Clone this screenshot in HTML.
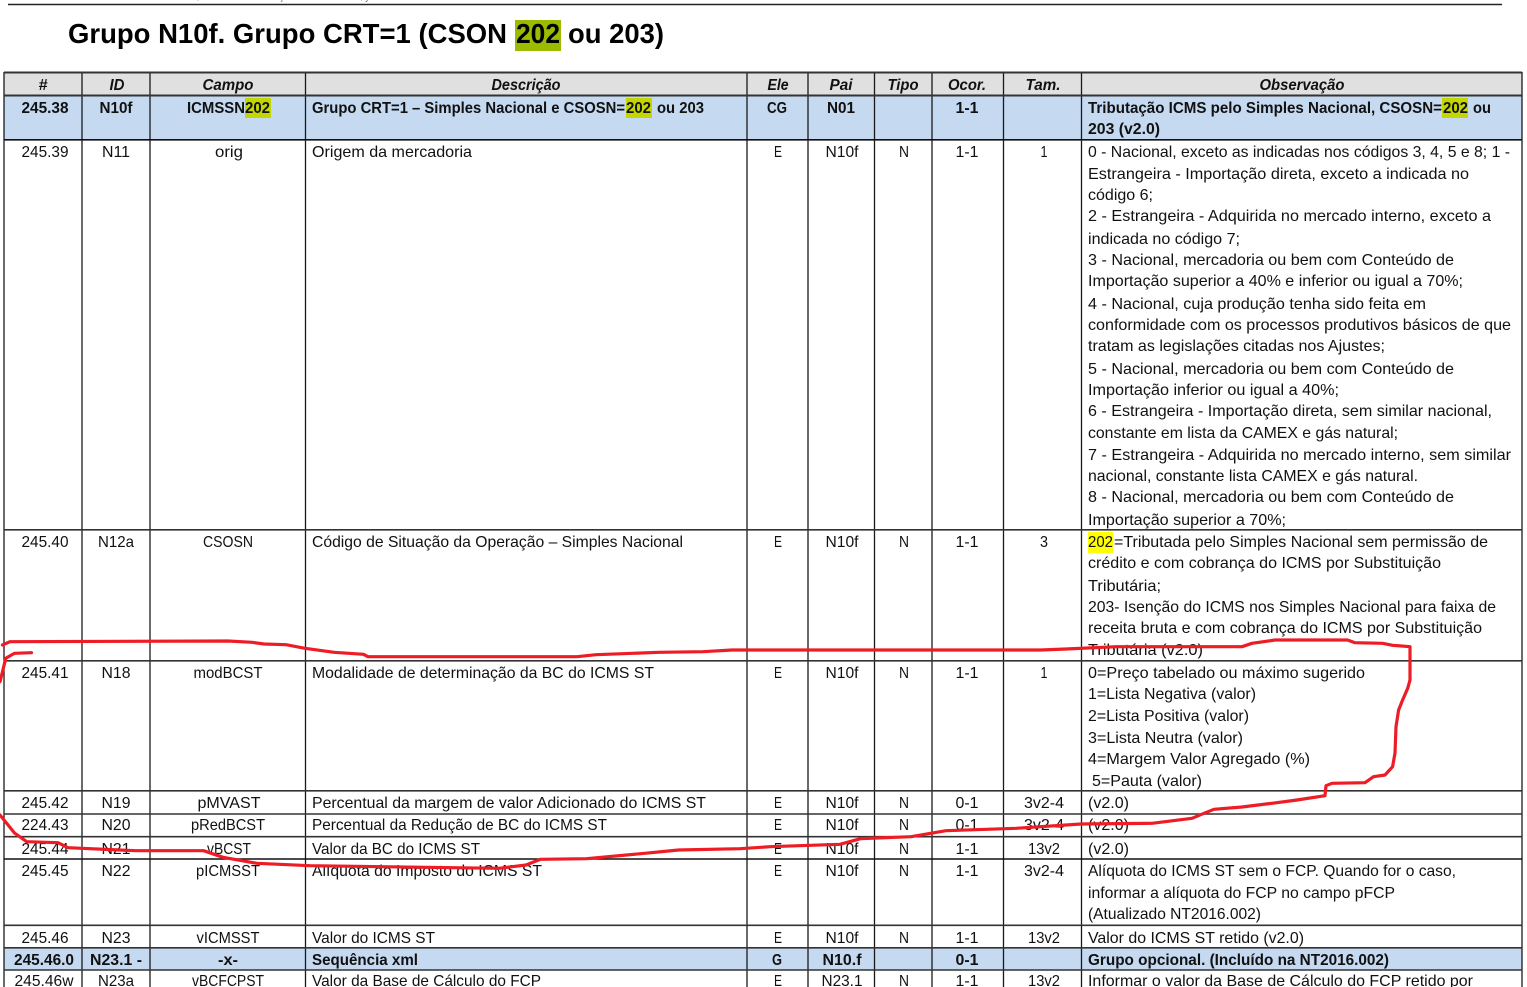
<!DOCTYPE html>
<html lang="pt"><head><meta charset="utf-8"><title>Grupo N10f</title>
<style>
html,body{margin:0;padding:0;background:#fff;width:1527px;height:987px;overflow:hidden}
svg{display:block}
text{font-family:"Liberation Sans",Arial,sans-serif;font-size:16px;fill:#111}
.c{text-anchor:middle}
.b{font-weight:bold}
.h{font-weight:bold;font-style:italic}
.t{font-size:28px;font-weight:bold;fill:#000}
.v{stroke:#1a1a1a;stroke-width:1.3}
.l{stroke:#333;stroke-width:1.6}
.r{fill:none;stroke:#ee1c25;stroke-width:3.2;stroke-linejoin:round;stroke-linecap:round}
</style></head><body>
<svg width="1527" height="987" viewBox="0 0 1527 987" xmlns="http://www.w3.org/2000/svg">
<rect width="1527" height="987" fill="#fff"/>
<text x="150" y="-1" style="font-size:14px;fill:#777" textLength="220" lengthAdjust="spacingAndGlyphs">Nota Fiscal, Manual de Orientação ao Contribuinte, y</text>
<line x1="8" y1="4.5" x2="1502" y2="4.5" stroke="#222" stroke-width="1.6"/>

<rect x="515" y="20" width="46" height="31" fill="#9bbb00"/>
<text class="t" x="68" y="43" textLength="439" lengthAdjust="spacingAndGlyphs">Grupo N10f. Grupo CRT=1 (CSON</text>
<text class="t" x="516" y="43" textLength="44" lengthAdjust="spacingAndGlyphs">202</text>
<text class="t" x="568" y="43" textLength="96" lengthAdjust="spacingAndGlyphs">ou 203)</text>

<rect x="4" y="73" width="1518" height="22" fill="#e0e0e0"/>
<rect x="4" y="95" width="1518" height="45" fill="#c5d9f1"/>
<rect x="4" y="948" width="1518" height="22" fill="#c5d9f1"/>
<rect x="245" y="98" width="26" height="20" fill="#c4d600"/>
<rect x="626" y="98" width="26" height="20" fill="#c4d600"/>
<rect x="1442" y="98" width="26" height="20" fill="#c4d600"/>
<rect x="1088" y="532" width="25" height="21" fill="#ffff00"/>

<g class="v">
<line class="v" x1="4" y1="72" x2="4" y2="987"/><line class="v" x1="82" y1="72" x2="82" y2="987"/><line class="v" x1="150" y1="72" x2="150" y2="987"/><line class="v" x1="305.500" y1="72" x2="305.500" y2="987"/><line class="v" x1="747" y1="72" x2="747" y2="987"/><line class="v" x1="808" y1="72" x2="808" y2="987"/><line class="v" x1="874.500" y1="72" x2="874.500" y2="987"/><line class="v" x1="932" y1="72" x2="932" y2="987"/><line class="v" x1="1003.500" y1="72" x2="1003.500" y2="987"/><line class="v" x1="1081.500" y1="72" x2="1081.500" y2="987"/><line class="v" x1="1522" y1="72" x2="1522" y2="987"/>
</g>
<line class="l" x1="4" y1="72.500" x2="1522" y2="72.500" style="stroke-width:2"/>
<line class="l" x1="4" y1="95.500" x2="1522" y2="95.500" style="stroke-width:2"/>
<line class="l" x1="4" y1="139.800" x2="1522" y2="139.800" style="stroke:#111"/>
<line class="l" x1="4" y1="529.800" x2="1522" y2="529.800"/>
<line class="l" x1="4" y1="660.800" x2="1522" y2="660.800"/>
<line class="l" x1="4" y1="790.800" x2="1522" y2="790.800"/>
<line class="l" x1="4" y1="814" x2="1522" y2="814"/>
<line class="l" x1="4" y1="836.700" x2="1522" y2="836.700"/>
<line class="l" x1="4" y1="859" x2="1522" y2="859" style="stroke:#111"/>
<line class="l" x1="4" y1="925.300" x2="1522" y2="925.300"/>
<line class="l" x1="4" y1="947.800" x2="1522" y2="947.800"/>
<line class="l" x1="4" y1="970" x2="1522" y2="970"/>

<g>
<!-- header -->
<text class="h c" x="43" y="90" textLength="9" lengthAdjust="spacingAndGlyphs">#</text>
<text class="h c" x="117" y="90" textLength="15" lengthAdjust="spacingAndGlyphs">ID</text>
<text class="h c" x="228" y="90" textLength="51" lengthAdjust="spacingAndGlyphs">Campo</text>
<text class="h c" x="526" y="90" textLength="69" lengthAdjust="spacingAndGlyphs">Descrição</text>
<text class="h c" x="778" y="90" textLength="21" lengthAdjust="spacingAndGlyphs">Ele</text>
<text class="h c" x="841" y="90" textLength="23" lengthAdjust="spacingAndGlyphs">Pai</text>
<text class="h c" x="903" y="90" textLength="31" lengthAdjust="spacingAndGlyphs">Tipo</text>
<text class="h c" x="967" y="90" textLength="38" lengthAdjust="spacingAndGlyphs">Ocor.</text>
<text class="h c" x="1043" y="90" textLength="35" lengthAdjust="spacingAndGlyphs">Tam.</text>
<text class="h c" x="1302" y="90" textLength="85" lengthAdjust="spacingAndGlyphs">Observação</text>

<!-- row 245.38 -->
<text class="b c" x="45" y="113" textLength="47" lengthAdjust="spacingAndGlyphs">245.38</text>
<text class="b c" x="116" y="113" textLength="33" lengthAdjust="spacingAndGlyphs">N10f</text>
<text class="b" x="187" y="113" textLength="58" lengthAdjust="spacingAndGlyphs">ICMSSN</text>
<text class="b" x="245" y="113" textLength="25" lengthAdjust="spacingAndGlyphs">202</text>
<text class="b" x="312" y="113" textLength="313" lengthAdjust="spacingAndGlyphs">Grupo CRT=1 – Simples Nacional e CSOSN=</text>
<text class="b" x="626" y="113" textLength="25" lengthAdjust="spacingAndGlyphs">202</text>
<text class="b" x="657" y="113" textLength="47" lengthAdjust="spacingAndGlyphs">ou 203</text>
<text class="b c" x="777" y="113" textLength="20" lengthAdjust="spacingAndGlyphs">CG</text>
<text class="b c" x="841" y="113" textLength="28" lengthAdjust="spacingAndGlyphs">N01</text>
<text class="b c" x="967" y="113" textLength="23" lengthAdjust="spacingAndGlyphs">1-1</text>
<text class="b" x="1088" y="113" textLength="354" lengthAdjust="spacingAndGlyphs">Tributação ICMS pelo Simples Nacional, CSOSN=</text>
<text class="b" x="1443" y="113" textLength="25" lengthAdjust="spacingAndGlyphs">202</text>
<text class="b" x="1473" y="113" textLength="18" lengthAdjust="spacingAndGlyphs">ou</text>
<text class="b" x="1088" y="134" textLength="72" lengthAdjust="spacingAndGlyphs">203 (v2.0)</text>

<!-- row 245.39 -->
<text class="c" x="45" y="157" textLength="47" lengthAdjust="spacingAndGlyphs">245.39</text>
<text class="c" x="116" y="157" textLength="28" lengthAdjust="spacingAndGlyphs">N11</text>
<text class="c" x="229" y="157" textLength="28" lengthAdjust="spacingAndGlyphs">orig</text>
<text x="312" y="157" textLength="160" lengthAdjust="spacingAndGlyphs">Origem da mercadoria</text>
<text class="c" x="778" y="157" textLength="8" lengthAdjust="spacingAndGlyphs">E</text>
<text class="c" x="842" y="157" textLength="33" lengthAdjust="spacingAndGlyphs">N10f</text>
<text class="c" x="904" y="157" textLength="10" lengthAdjust="spacingAndGlyphs">N</text>
<text class="c" x="967" y="157" textLength="23" lengthAdjust="spacingAndGlyphs">1-1</text>
<text class="c" x="1044" y="157" textLength="7" lengthAdjust="spacingAndGlyphs">1</text>
<text x="1088" y="157" textLength="422" lengthAdjust="spacingAndGlyphs">0 - Nacional, exceto as indicadas nos códigos 3, 4, 5 e 8; 1 -</text>
<text x="1088" y="179" textLength="381" lengthAdjust="spacingAndGlyphs">Estrangeira - Importação direta, exceto a indicada no</text>
<text x="1088" y="200" textLength="65" lengthAdjust="spacingAndGlyphs">código 6;</text>
<text x="1088" y="221" textLength="403" lengthAdjust="spacingAndGlyphs">2 - Estrangeira - Adquirida no mercado interno, exceto a</text>
<text x="1088" y="244" textLength="152" lengthAdjust="spacingAndGlyphs">indicada no código 7;</text>
<text x="1088" y="265" textLength="366" lengthAdjust="spacingAndGlyphs">3 - Nacional, mercadoria ou bem com Conteúdo de</text>
<text x="1088" y="286" textLength="375" lengthAdjust="spacingAndGlyphs">Importação superior a 40% e inferior ou igual a 70%;</text>
<text x="1088" y="309" textLength="338" lengthAdjust="spacingAndGlyphs">4 - Nacional, cuja produção tenha sido feita em</text>
<text x="1088" y="330" textLength="423" lengthAdjust="spacingAndGlyphs">conformidade com os processos produtivos básicos de que</text>
<text x="1088" y="351" textLength="297" lengthAdjust="spacingAndGlyphs">tratam as legislações citadas nos Ajustes;</text>
<text x="1088" y="374" textLength="366" lengthAdjust="spacingAndGlyphs">5 - Nacional, mercadoria ou bem com Conteúdo de</text>
<text x="1088" y="395" textLength="251" lengthAdjust="spacingAndGlyphs">Importação inferior ou igual a 40%;</text>
<text x="1088" y="416" textLength="404" lengthAdjust="spacingAndGlyphs">6 - Estrangeira - Importação direta, sem similar nacional,</text>
<text x="1088" y="438" textLength="310" lengthAdjust="spacingAndGlyphs">constante em lista da CAMEX e gás natural;</text>
<text x="1088" y="460" textLength="423" lengthAdjust="spacingAndGlyphs">7 - Estrangeira - Adquirida no mercado interno, sem similar</text>
<text x="1088" y="481" textLength="330" lengthAdjust="spacingAndGlyphs">nacional, constante lista CAMEX e gás natural.</text>
<text x="1088" y="502" textLength="366" lengthAdjust="spacingAndGlyphs">8 - Nacional, mercadoria ou bem com Conteúdo de</text>
<text x="1088" y="525" textLength="198" lengthAdjust="spacingAndGlyphs">Importação superior a 70%;</text>

<!-- row 245.40 -->
<text class="c" x="45" y="547" textLength="47" lengthAdjust="spacingAndGlyphs">245.40</text>
<text class="c" x="116" y="547" textLength="36" lengthAdjust="spacingAndGlyphs">N12a</text>
<text class="c" x="228" y="547" textLength="50" lengthAdjust="spacingAndGlyphs">CSOSN</text>
<text x="312" y="547" textLength="371" lengthAdjust="spacingAndGlyphs">Código de Situação da Operação – Simples Nacional</text>
<text class="c" x="778" y="547" textLength="8" lengthAdjust="spacingAndGlyphs">E</text>
<text class="c" x="842" y="547" textLength="33" lengthAdjust="spacingAndGlyphs">N10f</text>
<text class="c" x="904" y="547" textLength="10" lengthAdjust="spacingAndGlyphs">N</text>
<text class="c" x="967" y="547" textLength="23" lengthAdjust="spacingAndGlyphs">1-1</text>
<text class="c" x="1044" y="547" textLength="8" lengthAdjust="spacingAndGlyphs">3</text>
<text x="1088" y="547" textLength="25" lengthAdjust="spacingAndGlyphs">202</text>
<text x="1114" y="547" textLength="374" lengthAdjust="spacingAndGlyphs">=Tributada pelo Simples Nacional sem permissão de</text>
<text x="1088" y="568" textLength="353" lengthAdjust="spacingAndGlyphs">crédito e com cobrança do ICMS por Substituição</text>
<text x="1088" y="591" textLength="73" lengthAdjust="spacingAndGlyphs">Tributária;</text>
<text x="1088" y="612" textLength="408" lengthAdjust="spacingAndGlyphs">203- Isenção do ICMS nos Simples Nacional para faixa de</text>
<text x="1088" y="633" textLength="394" lengthAdjust="spacingAndGlyphs">receita bruta e com cobrança do ICMS por Substituição</text>
<text x="1088" y="655" textLength="115" lengthAdjust="spacingAndGlyphs">Tributária (v2.0)</text>

<!-- row 245.41 -->
<text class="c" x="45" y="678" textLength="47" lengthAdjust="spacingAndGlyphs">245.41</text>
<text class="c" x="116" y="678" textLength="29" lengthAdjust="spacingAndGlyphs">N18</text>
<text class="c" x="228" y="678" textLength="69" lengthAdjust="spacingAndGlyphs">modBCST</text>
<text x="312" y="678" textLength="342" lengthAdjust="spacingAndGlyphs">Modalidade de determinação da BC do ICMS ST</text>
<text class="c" x="778" y="678" textLength="8" lengthAdjust="spacingAndGlyphs">E</text>
<text class="c" x="842" y="678" textLength="33" lengthAdjust="spacingAndGlyphs">N10f</text>
<text class="c" x="904" y="678" textLength="10" lengthAdjust="spacingAndGlyphs">N</text>
<text class="c" x="967" y="678" textLength="23" lengthAdjust="spacingAndGlyphs">1-1</text>
<text class="c" x="1044" y="678" textLength="7" lengthAdjust="spacingAndGlyphs">1</text>
<text x="1088" y="678" textLength="277" lengthAdjust="spacingAndGlyphs">0=Preço tabelado ou máximo sugerido</text>
<text x="1088" y="699" textLength="168" lengthAdjust="spacingAndGlyphs">1=Lista Negativa (valor)</text>
<text x="1088" y="721" textLength="161" lengthAdjust="spacingAndGlyphs">2=Lista Positiva (valor)</text>
<text x="1088" y="743" textLength="155" lengthAdjust="spacingAndGlyphs">3=Lista Neutra (valor)</text>
<text x="1088" y="764" textLength="222" lengthAdjust="spacingAndGlyphs">4=Margem Valor Agregado (%)</text>
<text x="1092" y="786" textLength="110" lengthAdjust="spacingAndGlyphs">5=Pauta (valor)</text>

<!-- row 245.42 -->
<text class="c" x="45" y="808" textLength="47" lengthAdjust="spacingAndGlyphs">245.42</text>
<text class="c" x="116" y="808" textLength="29" lengthAdjust="spacingAndGlyphs">N19</text>
<text class="c" x="229" y="808" textLength="63" lengthAdjust="spacingAndGlyphs">pMVAST</text>
<text x="312" y="808" textLength="394" lengthAdjust="spacingAndGlyphs">Percentual da margem de valor Adicionado do ICMS ST</text>
<text class="c" x="778" y="808" textLength="8" lengthAdjust="spacingAndGlyphs">E</text>
<text class="c" x="842" y="808" textLength="33" lengthAdjust="spacingAndGlyphs">N10f</text>
<text class="c" x="904" y="808" textLength="10" lengthAdjust="spacingAndGlyphs">N</text>
<text class="c" x="967" y="808" textLength="23" lengthAdjust="spacingAndGlyphs">0-1</text>
<text class="c" x="1044" y="808" textLength="40" lengthAdjust="spacingAndGlyphs">3v2-4</text>
<text x="1088" y="808" textLength="41" lengthAdjust="spacingAndGlyphs">(v2.0)</text>

<!-- row 224.43 -->
<text class="c" x="45" y="830" textLength="47" lengthAdjust="spacingAndGlyphs">224.43</text>
<text class="c" x="116" y="830" textLength="29" lengthAdjust="spacingAndGlyphs">N20</text>
<text class="c" x="228" y="830" textLength="74" lengthAdjust="spacingAndGlyphs">pRedBCST</text>
<text x="312" y="830" textLength="295" lengthAdjust="spacingAndGlyphs">Percentual da Redução de BC do ICMS ST</text>
<text class="c" x="778" y="830" textLength="8" lengthAdjust="spacingAndGlyphs">E</text>
<text class="c" x="842" y="830" textLength="33" lengthAdjust="spacingAndGlyphs">N10f</text>
<text class="c" x="904" y="830" textLength="10" lengthAdjust="spacingAndGlyphs">N</text>
<text class="c" x="967" y="830" textLength="23" lengthAdjust="spacingAndGlyphs">0-1</text>
<text class="c" x="1044" y="830" textLength="40" lengthAdjust="spacingAndGlyphs">3v2-4</text>
<text x="1088" y="830" textLength="41" lengthAdjust="spacingAndGlyphs">(v2.0)</text>

<!-- row 245.44 -->
<text class="c" x="45" y="854" textLength="47" lengthAdjust="spacingAndGlyphs">245.44</text>
<text class="c" x="116" y="854" textLength="29" lengthAdjust="spacingAndGlyphs">N21</text>
<text class="c" x="229" y="854" textLength="44" lengthAdjust="spacingAndGlyphs">vBCST</text>
<text x="312" y="854" textLength="168" lengthAdjust="spacingAndGlyphs">Valor da BC do ICMS ST</text>
<text class="c" x="778" y="854" textLength="8" lengthAdjust="spacingAndGlyphs">E</text>
<text class="c" x="842" y="854" textLength="33" lengthAdjust="spacingAndGlyphs">N10f</text>
<text class="c" x="904" y="854" textLength="10" lengthAdjust="spacingAndGlyphs">N</text>
<text class="c" x="967" y="854" textLength="23" lengthAdjust="spacingAndGlyphs">1-1</text>
<text class="c" x="1044" y="854" textLength="32" lengthAdjust="spacingAndGlyphs">13v2</text>
<text x="1088" y="854" textLength="41" lengthAdjust="spacingAndGlyphs">(v2.0)</text>

<!-- row 245.45 -->
<text class="c" x="45" y="876" textLength="47" lengthAdjust="spacingAndGlyphs">245.45</text>
<text class="c" x="116" y="876" textLength="29" lengthAdjust="spacingAndGlyphs">N22</text>
<text class="c" x="228" y="876" textLength="64" lengthAdjust="spacingAndGlyphs">pICMSST</text>
<text x="312" y="876" textLength="230" lengthAdjust="spacingAndGlyphs">Alíquota do Imposto do ICMS ST</text>
<text class="c" x="778" y="876" textLength="8" lengthAdjust="spacingAndGlyphs">E</text>
<text class="c" x="842" y="876" textLength="33" lengthAdjust="spacingAndGlyphs">N10f</text>
<text class="c" x="904" y="876" textLength="10" lengthAdjust="spacingAndGlyphs">N</text>
<text class="c" x="967" y="876" textLength="23" lengthAdjust="spacingAndGlyphs">1-1</text>
<text class="c" x="1044" y="876" textLength="40" lengthAdjust="spacingAndGlyphs">3v2-4</text>
<text x="1088" y="876" textLength="368" lengthAdjust="spacingAndGlyphs">Alíquota do ICMS ST sem o FCP. Quando for o caso,</text>
<text x="1088" y="898" textLength="307" lengthAdjust="spacingAndGlyphs">informar a alíquota do FCP no campo pFCP</text>
<text x="1088" y="919" textLength="173" lengthAdjust="spacingAndGlyphs">(Atualizado NT2016.002)</text>

<!-- row 245.46 -->
<text class="c" x="45" y="943" textLength="47" lengthAdjust="spacingAndGlyphs">245.46</text>
<text class="c" x="116" y="943" textLength="29" lengthAdjust="spacingAndGlyphs">N23</text>
<text class="c" x="228" y="943" textLength="63" lengthAdjust="spacingAndGlyphs">vICMSST</text>
<text x="312" y="943" textLength="123" lengthAdjust="spacingAndGlyphs">Valor do ICMS ST</text>
<text class="c" x="778" y="943" textLength="8" lengthAdjust="spacingAndGlyphs">E</text>
<text class="c" x="842" y="943" textLength="33" lengthAdjust="spacingAndGlyphs">N10f</text>
<text class="c" x="904" y="943" textLength="10" lengthAdjust="spacingAndGlyphs">N</text>
<text class="c" x="967" y="943" textLength="23" lengthAdjust="spacingAndGlyphs">1-1</text>
<text class="c" x="1044" y="943" textLength="32" lengthAdjust="spacingAndGlyphs">13v2</text>
<text x="1088" y="943" textLength="216" lengthAdjust="spacingAndGlyphs">Valor do ICMS ST retido (v2.0)</text>

<!-- row 245.46.0 -->
<text class="b c" x="44" y="965" textLength="60" lengthAdjust="spacingAndGlyphs">245.46.0</text>
<text class="b c" x="116" y="965" textLength="52" lengthAdjust="spacingAndGlyphs">N23.1 -</text>
<text class="b c" x="228" y="965" textLength="20" lengthAdjust="spacingAndGlyphs">-x-</text>
<text class="b" x="312" y="965" textLength="106" lengthAdjust="spacingAndGlyphs">Sequência xml</text>
<text class="b c" x="777" y="965" textLength="10" lengthAdjust="spacingAndGlyphs">G</text>
<text class="b c" x="842" y="965" textLength="39" lengthAdjust="spacingAndGlyphs">N10.f</text>
<text class="b c" x="967" y="965" textLength="23" lengthAdjust="spacingAndGlyphs">0-1</text>
<text class="b" x="1088" y="965" textLength="301" lengthAdjust="spacingAndGlyphs">Grupo opcional. (Incluído na NT2016.002)</text>

<!-- row 245.46w -->
<text class="c" x="44" y="986" textLength="59" lengthAdjust="spacingAndGlyphs">245.46w</text>
<text class="c" x="116" y="986" textLength="36" lengthAdjust="spacingAndGlyphs">N23a</text>
<text class="c" x="228" y="986" textLength="72" lengthAdjust="spacingAndGlyphs">vBCFCPST</text>
<text x="312" y="986" textLength="229" lengthAdjust="spacingAndGlyphs">Valor da Base de Cálculo do FCP</text>
<text class="c" x="778" y="986" textLength="8" lengthAdjust="spacingAndGlyphs">E</text>
<text class="c" x="842" y="986" textLength="41" lengthAdjust="spacingAndGlyphs">N23.1</text>
<text class="c" x="904" y="986" textLength="10" lengthAdjust="spacingAndGlyphs">N</text>
<text class="c" x="967" y="986" textLength="23" lengthAdjust="spacingAndGlyphs">1-1</text>
<text class="c" x="1044" y="986" textLength="32" lengthAdjust="spacingAndGlyphs">13v2</text>
<text x="1088" y="986" textLength="385" lengthAdjust="spacingAndGlyphs">Informar o valor da Base de Cálculo do FCP retido por</text>
</g>

<path class="r" d="M2.400 645L10 641.700L228 641L252 642.300L264 644L286 644.700L305 648.300L334 652.300L363.500 654.300L368 656.700L577 656.700L596 654.700L659 652.300L703 651.700L732 650L1041 650L1066 649L1116.500 646.700L1242 646.700L1252 643.300L1275 640L1347.500 640L1355 642.700L1382.500 643.300L1392.600 645.300L1410 646.700L1410 680L1407.700 688.300L1402.600 700L1398.600 710L1396 726.700L1395 753L1392.600 766.700L1385 775L1373.500 776.700L1365 782.700L1332 783.300L1326 785.700L1325 795.700L1297 800L1272 803.300L1242 807L1214 809.300L1204 813.300L1192 818.300L1152 823.300L1081 824L1016 828.300L946 830.700L911 836.700L860.500 838.700L840 844.300L770 846.700L740 848.700L678.600 850L644.700 853.300L586.500 858.700L540.500 859.300L526 865L499 868.300L310 865.700L257 863.300L223 857.300L203.600 850.700L135.700 850.700L68 847.700L58 842.700L26.700 841.700L14.500 833L0 815"/>
<path class="r" d="M31.500 652.700L14.500 653.300L5.800 658.300L0 681.700"/>
</svg>
</body></html>
